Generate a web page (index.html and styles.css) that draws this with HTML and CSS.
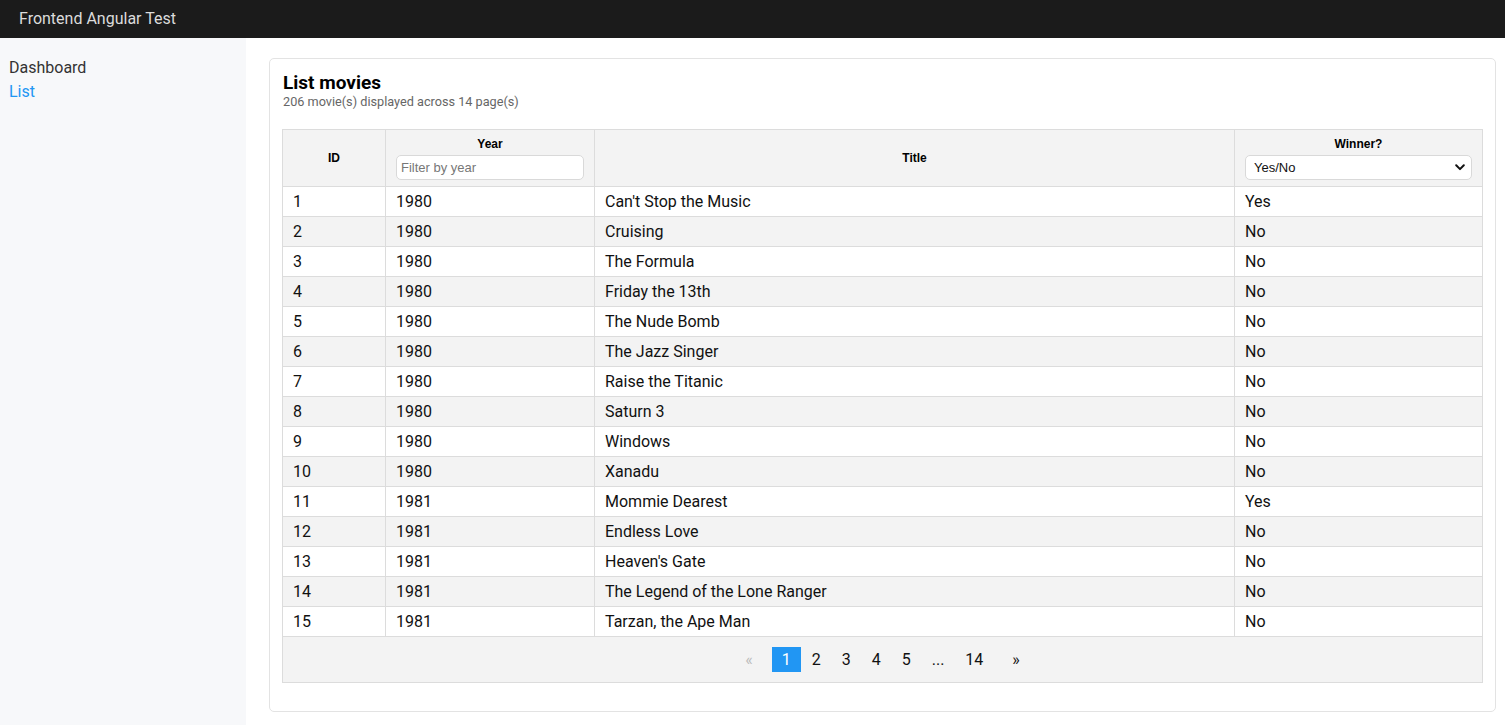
FILE: index.html
```html
<!DOCTYPE html>
<html lang="en">
<head>
<meta charset="utf-8">
<title>Frontend Angular Test</title>
<link rel="stylesheet" href="styles.css">
</head>
<body>
<header class="topbar">Frontend Angular Test</header>
<div class="layout">
  <nav class="sidebar">
    <a class="nav-link" href="#">Dashboard</a>
    <a class="nav-link active" href="#">List</a>
  </nav>
  <main class="main">
    <section class="card">
      <h1 class="card-title">List movies</h1>
      <p class="card-sub">206 movie(s) displayed across 14 page(s)</p>
      <table class="movies">
        <colgroup>
          <col class="c-id"><col class="c-year"><col class="c-title"><col class="c-win">
        </colgroup>
        <thead>
          <tr>
            <th>ID</th>
            <th><div class="th-label">Year</div><input class="filter" type="text" placeholder="Filter by year"></th>
            <th>Title</th>
            <th>
              <div class="th-label">Winner?</div>
              <div class="select-wrap">
                <select class="filter select"><option>Yes/No</option></select>
                <svg class="chev" width="10" height="7" viewBox="0 0 10 7" aria-hidden="true"><path d="M1.2 1.3 L5 5.1 L8.8 1.3" fill="none" stroke="#111" stroke-width="2" stroke-linecap="round" stroke-linejoin="round"/></svg>
              </div>
            </th>
          </tr>
        </thead>
        <tbody>
          <tr><td>1</td><td>1980</td><td>Can't Stop the Music</td><td>Yes</td></tr>
          <tr><td>2</td><td>1980</td><td>Cruising</td><td>No</td></tr>
          <tr><td>3</td><td>1980</td><td>The Formula</td><td>No</td></tr>
          <tr><td>4</td><td>1980</td><td>Friday the 13th</td><td>No</td></tr>
          <tr><td>5</td><td>1980</td><td>The Nude Bomb</td><td>No</td></tr>
          <tr><td>6</td><td>1980</td><td>The Jazz Singer</td><td>No</td></tr>
          <tr><td>7</td><td>1980</td><td>Raise the Titanic</td><td>No</td></tr>
          <tr><td>8</td><td>1980</td><td>Saturn 3</td><td>No</td></tr>
          <tr><td>9</td><td>1980</td><td>Windows</td><td>No</td></tr>
          <tr><td>10</td><td>1980</td><td>Xanadu</td><td>No</td></tr>
          <tr><td>11</td><td>1981</td><td>Mommie Dearest</td><td>Yes</td></tr>
          <tr><td>12</td><td>1981</td><td>Endless Love</td><td>No</td></tr>
          <tr><td>13</td><td>1981</td><td>Heaven's Gate</td><td>No</td></tr>
          <tr><td>14</td><td>1981</td><td>The Legend of the Lone Ranger</td><td>No</td></tr>
          <tr><td>15</td><td>1981</td><td>Tarzan, the Ape Man</td><td>No</td></tr>
        </tbody>
        <tfoot>
          <tr>
            <td colspan="4" class="pager-cell">
              <ul class="pager">
                <li class="pg arrow disabled">«</li>
                <li class="pg current">1</li>
                <li class="pg">2</li>
                <li class="pg">3</li>
                <li class="pg">4</li>
                <li class="pg">5</li>
                <li class="pg">...</li>
                <li class="pg">14</li>
                <li class="pg arrow">»</li>
              </ul>
            </td>
          </tr>
        </tfoot>
      </table>
    </section>
  </main>
</div>
</body>
</html>
```
FILE: styles.css
```css
* { box-sizing: border-box; }
html, body { margin: 0; padding: 0; }
body {
  font-family: Roboto, "Liberation Sans", Arial, sans-serif;
  color: #111;
  background: #fff;
  height: 725px;
  display: flex;
  flex-direction: column;
  overflow: hidden;
}
.topbar {
  height: 38px;
  background: #1b1b1b;
  color: #dcdcdc;
  font-size: 16px;
  line-height: 38px;
  padding-left: 19px;
  flex: none;
}
.layout {
  flex: 1;
  display: flex;
  min-height: 0;
}
.sidebar {
  width: 246px;
  flex: none;
  background: #f7f8fa;
  padding: 18px 9px;
  display: flex;
  flex-direction: column;
}
.nav-link {
  color: #333;
  text-decoration: none;
  font-size: 16px;
  line-height: 24px;
}
.nav-link.active { color: #2196f3; }
.main {
  flex: 1;
  padding: 20px 9px 13px 23px;
  display: flex;
  flex-direction: column;
}
.card {
  flex: 1;
  border: 1px solid #e3e3e3;
  border-radius: 5px;
  padding: 13px 12px 12px 12px;
}
.card-title {
  margin: 0 0 0 1px;
  font-size: 19px;
  line-height: 22px;
  font-weight: 700;
  color: #000;
}
.card-sub {
  margin: 0 0 19px 1px;
  font-size: 12.7px;
  line-height: 16px;
  color: #666;
}
.movies {
  width: 100%;
  border-collapse: collapse;
  table-layout: fixed;
  border: 1px solid #dcdcdc;
}
.c-id { width: 103px; }
.c-year { width: 209px; }
.c-win { width: 248px; }
.movies th, .movies td {
  border: 1px solid #dcdcdc;
}
.movies th {
  background: #f3f3f3;
  font-family: "Liberation Sans", Arial, sans-serif;
  font-size: 12px;
  font-weight: 700;
  color: #000;
  text-align: center;
  vertical-align: middle;
  padding: 6px 10px 6px 10px;
  height: 57px;
}
.th-label {
  line-height: 15px;
  margin-bottom: 3px;
}
.filter {
  display: block;
  width: 100%;
  height: 25px;
  border: 1px solid #d9d9d9;
  border-radius: 5px;
  background: #fff;
  font-family: "Liberation Sans", Arial, sans-serif;
  font-weight: 400;
  font-size: 13px;
  color: #111;
  padding: 0 4px;
  text-align: left;
  outline: none;
}
.filter::placeholder { color: #777; }
.select-wrap { position: relative; }
.select {
  appearance: none;
  -webkit-appearance: none;
  padding: 0 8px;
}
.chev {
  position: absolute;
  right: 7px;
  top: 9px;
  pointer-events: none;
}
.movies td {
  font-size: 16px;
  line-height: 19px;
  padding: 5px 10px 5px 10px;
  height: 30px;
}
.movies tbody tr:nth-child(even) td { background: #f3f3f3; }
.movies .pager-cell {
  background: #f3f3f3;
  height: 46px;
  padding: 0;
}
.pager {
  list-style: none;
  margin: 0;
  padding: 0;
  display: flex;
  justify-content: center;
  align-items: center;
  gap: 1px;
}
.pg {
  font-size: 16px;
  line-height: 25px;
  height: 25px;
  padding: 0 10px;
  color: #111;
}
.pg.current {
  background: #2196f3;
  color: #fff;
}
.pg.arrow { margin: 0 8px; }
.pg.disabled { color: #bbb; }
```
